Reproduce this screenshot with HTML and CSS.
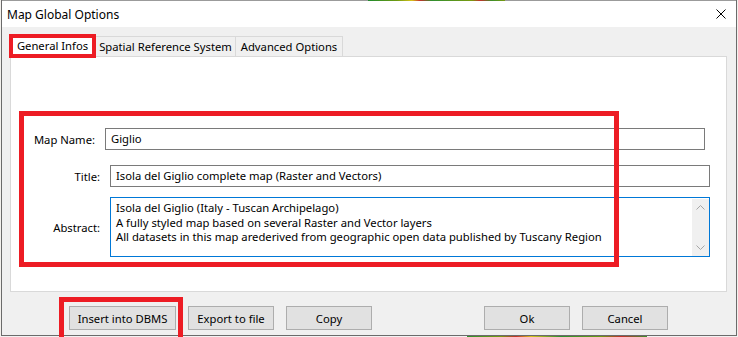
FILE: index.html
```html
<!DOCTYPE html>
<html>
<head>
<meta charset="utf-8">
<title>Map Global Options</title>
<link rel="stylesheet" href="styles.css">
</head>
<body>
<div class="screen">
  <div class="window">
    <div class="topline"></div>
    <div class="titlebar">
      <span class="title">Map Global Options</span>
      <svg class="close" width="10" height="10" viewBox="0 0 10 10" aria-label="Close"><path d="M0.5 0.5L9.5 9.5M9.5 0.5L0.5 9.5" stroke="#000" stroke-width="1" fill="none"/></svg>
    </div>
    <div class="client">
      <div class="tabs">
        <div class="tab active">General Infos</div>
        <div class="tab t2">Spatial Reference System</div>
        <div class="tab t3">Advanced Options</div>
      </div>
      <div class="panel">
        <div class="form">
          <div class="row r1">
            <label class="lbl narrow">Map Name:</label>
            <div class="field">Giglio</div>
          </div>
          <div class="row r2">
            <label class="lbl">Title:</label>
            <div class="field">Isola del Giglio complete map (Raster and Vectors)</div>
          </div>
          <div class="row r3">
            <label class="lbl">Abstract:</label>
            <div class="textarea">
              <div class="lines">
                <div class="line">Isola del Giglio (Italy - Tuscan Archipelago)</div>
                <div class="line">A fully styled map based on several Raster and Vector layers</div>
                <div class="line">All datasets in this map arederived from geographic open data published by Tuscany Region</div>
              </div>
              <div class="vscroll">
                <div class="arrow"><svg width="9" height="5" viewBox="0 0 9 5"><path d="M0.5 4.5L4.5 0.5L8.5 4.5" stroke="#a6a6a6" stroke-width="1" fill="none"/></svg></div>
                <div class="arrow"><svg width="9" height="5" viewBox="0 0 9 5"><path d="M0.5 0.5L4.5 4.5L8.5 0.5" stroke="#a6a6a6" stroke-width="1" fill="none"/></svg></div>
              </div>
            </div>
          </div>
        </div>
      </div>
      <div class="buttons">
        <div class="btn wide">Insert into DBMS</div>
        <div class="btn">Export to file</div>
        <div class="btn">Copy</div>
        <div class="btn push">Ok</div>
        <div class="btn">Cancel</div>
      </div>
    </div>
  </div>
  <div class="bottomline"></div>
  <div class="mark m-tab"></div>
  <div class="mark m-form"></div>
  <div class="mark m-btn"></div>
</div>
</body>
</html>
```

FILE: styles.css
```css
* {
  box-sizing: border-box;
  margin: 0;
  padding: 0;
}

html, body {
  width: 738px;
  height: 337px;
  overflow: hidden;
}

body {
  background: #f3f1ed;
  font-family: "Noto Sans", "Open Sans", sans-serif;
  font-size: 11.25px;
  color: #000;
}

.screen {
  position: relative;
  width: 738px;
  height: 337px;
  overflow: hidden;
}

.window {
  margin-left: 1px;
  width: 736px;
  height: 336px;
  border: 1px solid #6b6b6b;
  border-top: 0;
  background: #f0f0f0;
  display: flex;
  flex-direction: column;
}

.topline {
  height: 1px;
  flex: none;
  background: linear-gradient(to right,
    #9b9b9b 0, #9b9b9b 366px,
    #1f8a2e 366px, #6e9a12 395px, #d8c21a 410px, #c4302b 418px,
    #2f8f2f 430px, #7a9a10 470px, #c4302b 478px, #3c8f2a 490px, #7a9a10 503px,
    #9b9b9b 503px);
}

.titlebar {
  height: 26px;
  flex: none;
  background: #fff;
  display: flex;
  align-items: center;
  padding-left: 5px;
}

.title {
  font-size: 12px;
}

.close {
  margin-left: auto;
  margin-right: 10px;
}

.client {
  flex: 1;
  padding: 9px 0 0 8px;
}

.tabs {
  display: flex;
  height: 20px;
}

.tab {
  height: 20px;
  border: 1px solid #d9d9d9;
  border-bottom: 0;
  display: flex;
  align-items: center;
  justify-content: center;
  background: #f0f0f0;
  white-space: nowrap;
}

.tab.active {
  width: 85px;
  height: 23px;
  margin-top: -2px;
  padding-bottom: 2px;
  background: #fff;
  position: relative;
  z-index: 1;
}

.t2 {
  width: 141px;
}

.t3 {
  width: 108px;
  margin-left: -1px;
}

.panel {
  width: 717px;
  height: 236px;
  background: #fff;
  border: 1px solid #d9d9d9;
}

.form {
  padding: 71px 0 0 9px;
}

.row {
  display: flex;
  align-items: center;
  gap: 10px;
}

.r1 {
  height: 22px;
  margin-bottom: 15px;
}

.r2 {
  height: 22px;
  margin-bottom: 10px;
}

.r3 {
  height: 60px;
}

.lbl {
  width: 80px;
  text-align: right;
  white-space: nowrap;
}

.lbl.narrow {
  width: 75px;
}

.field {
  width: 600px;
  height: 22px;
  border: 1px solid #7a7a7a;
  padding-left: 5px;
  line-height: 20px;
  white-space: nowrap;
}

.textarea {
  width: 600px;
  height: 60px;
  border: 1px solid #0078d7;
  display: flex;
}

.lines {
  flex: 1;
  padding: 3px 5px;
  white-space: nowrap;
}

.line {
  height: 14.5px;
  line-height: 14.5px;
}

.vscroll {
  width: 17px;
  margin: 1px 0 0;
  background: #f0f0f0;
  display: flex;
  flex-direction: column;
  justify-content: space-between;
}

.arrow {
  height: 17px;
  display: flex;
  align-items: center;
  justify-content: center;
}

.buttons {
  display: flex;
  gap: 12px;
  margin-top: 14px;
  padding-left: 59px;
}

.btn {
  width: 86px;
  height: 24px;
  border: 1px solid #adadad;
  background: #e1e1e1;
  display: flex;
  align-items: center;
  justify-content: center;
  white-space: nowrap;
}

.btn.wide {
  width: 107px;
}

.btn.push {
  margin-left: 100px;
}

.bottomline {
  height: 1px;
  width: 736px;
  margin-left: 1px;
  background: linear-gradient(to right,
    #f2f2f2 0, #f2f2f2 466px,
    #2f8f2f 466px, #7a9a10 500px, #c4302b 515px, #d8c21a 530px,
    #2f8f2f 560px, #6e9a12 600px, #c4302b 620px, #3c8f2a 646px,
    #f2f2f2 646px);
}

.mark {
  position: absolute;
  z-index: 5;
  border: 5px solid #ed1c24;
}

.m-tab {
  left: 9px;
  top: 34px;
  width: 87px;
  height: 24px;
  border-width: 4px;
}

.m-form {
  left: 19px;
  top: 111px;
  width: 600px;
  height: 156px;
}

.m-btn {
  left: 59px;
  top: 297px;
  width: 124px;
  height: 45px;
}
```
